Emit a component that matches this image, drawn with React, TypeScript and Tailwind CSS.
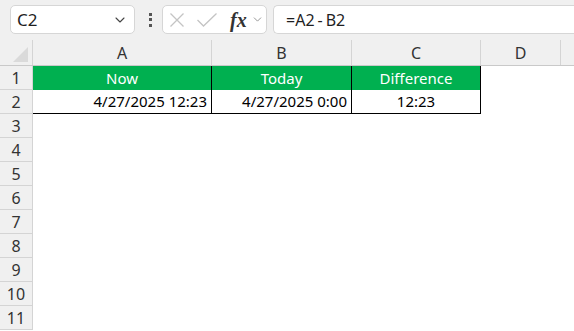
import React from 'react';
import { ChevronDown } from 'lucide-react';

const cols = [
  { key: 'A', w: 'w-[179px]' },
  { key: 'B', w: 'w-[140px]' },
  { key: 'C', w: 'w-[129px]' },
  { key: 'D', w: 'w-[80px]' },
];

const rows = [1, 2, 3, 4, 5, 6, 7, 8, 9, 10, 11];

const FormulaBar: React.FC = () => (
  <div className="flex h-[40px] items-start gap-0 bg-[#f0f0f0] pt-[5px]">
    <div className="ml-[10px] flex h-[29px] w-[125px] items-center justify-between rounded-[5px] border border-[#d6d6d6] bg-white pl-[6px] pr-[6px]">
      <span className="text-[17px] text-[#1f1f1f]">C2</span>
      <ChevronDown className="h-[16px] w-[16px] text-[#444]" strokeWidth={1.6} />
    </div>
    <div className="ml-[11px] flex h-[29px] w-[8px] flex-col items-center justify-center gap-[2.5px]">
      <span className="h-[3px] w-[3px] bg-[#555]" />
      <span className="h-[3px] w-[3px] bg-[#555]" />
      <span className="h-[3px] w-[3px] bg-[#555]" />
    </div>
    <div className="ml-[8px] flex h-[29px] w-[105px] items-center rounded-[5px] border border-[#d6d6d6] bg-white">
      <svg width="16" height="16" viewBox="0 0 16 16" className="ml-[6px]">
        <path d="M1.5 1.5 L14.5 14.5 M14.5 1.5 L1.5 14.5" stroke="#c4c4c4" strokeWidth="1.3" fill="none" />
      </svg>
      <svg width="22" height="16" viewBox="0 0 22 16" className="ml-[11px]">
        <path d="M1.5 8 L7.5 14 L20.5 1.5" stroke="#c4c4c4" strokeWidth="1.3" fill="none" />
      </svg>
      <span className="ml-[12px] font-['Liberation_Serif'] text-[20px] font-bold italic leading-none text-[#333]">
        fx
      </span>
      <ChevronDown className="ml-[4px] h-[13px] w-[13px] text-[#888]" strokeWidth={1.6} />
    </div>
    <div className="ml-[6px] flex h-[29px] flex-1 items-center rounded-l-[5px] border border-r-0 border-[#d6d6d6] bg-white pl-[12px]">
      <span className="text-[16px] text-[#1f1f1f]">
        =A2<span className="mx-[3px]">-</span>B2
      </span>
    </div>
  </div>
);

const Cell: React.FC<{ w: string; className?: string; children?: React.ReactNode }> = ({ w, className = '', children }) => (
  <div className={`${w} flex h-full shrink-0 items-center px-[4px] ${className}`}>{children}</div>
);

const App: React.FC = () => {
  return (
    <div className="h-[331px] w-[574px] overflow-hidden bg-white font-['Noto_Sans','Liberation_Sans',sans-serif] text-[15px]">
      <FormulaBar />

      {/* column headers */}
      <div className="flex h-[26px] border-b border-[#c9c9c9] bg-[#f0f0f0]">
        <div className="relative w-[33px] shrink-0 border-r border-[#d4d4d4]">
          <div className="absolute bottom-[3px] right-[4px] h-0 w-0 border-b-[15px] border-l-[15px] border-b-[#dadada] border-l-transparent" />
        </div>
        {cols.map((c) => (
          <div
            key={c.key}
            className={`${c.w} flex shrink-0 items-center justify-center border-r border-[#d4d4d4] text-[16px] text-[#333]`}
          >
            {c.key}
          </div>
        ))}
        <div className="flex-1" />
      </div>

      {/* rows */}
      {rows.map((r) => (
        <div key={r} className="flex h-[24px]">
          <div className="flex w-[33px] shrink-0 items-center justify-center border-r border-b border-[#d4d4d4] bg-[#f0f0f0] text-[16px] text-[#333]">
            {r}
          </div>
          {r === 1 && (
            <>
              <Cell w="w-[179px]" className="justify-center bg-[#00b050] text-white border-r border-black">Now</Cell>
              <Cell w="w-[140px]" className="justify-center bg-[#00b050] text-white border-r border-black">Today</Cell>
              <Cell w="w-[129px]" className="justify-center bg-[#00b050] text-white border-r border-black">Difference</Cell>
            </>
          )}
          {r === 2 && (
            <>
              <Cell w="w-[179px]" className="justify-end border-r border-b border-black text-black">4/27/2025 12:23</Cell>
              <Cell w="w-[140px]" className="justify-end border-r border-b border-black text-black">4/27/2025 0:00</Cell>
              <Cell w="w-[129px]" className="justify-center border-r border-b border-black text-black">12:23</Cell>
            </>
          )}
          <div className="flex-1" />
        </div>
      ))}
    </div>
  );
};

export default App;
